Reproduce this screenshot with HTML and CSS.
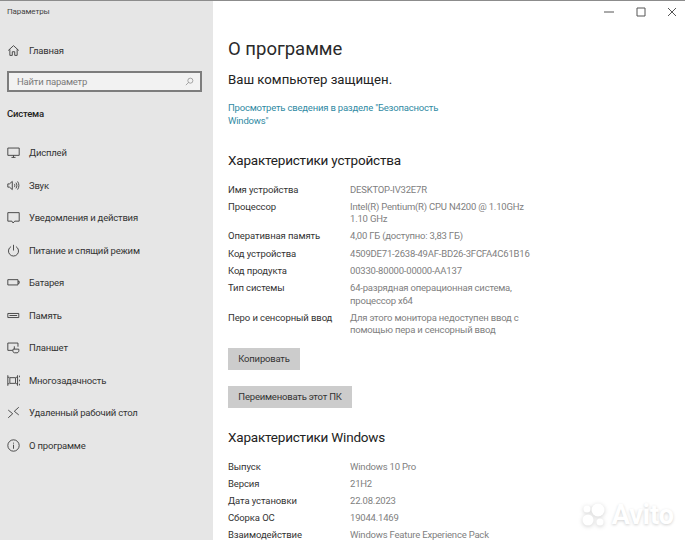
FILE: index.html
```html
<!DOCTYPE html>
<html lang="ru">
<head>
    <meta charset="UTF-8">
    <meta name="viewport" content="width=device-width, initial-scale=1.0">
    <title>Параметры</title>
    <link rel="stylesheet" href="styles.css">
</head>
<body>
    <div class="window">
        <aside class="sidebar">
            <div class="app-title">Параметры</div>
            <div class="home-row">
                <svg class="icon" viewBox="0 0 16 16"><path d="M1.500 8 8 2l6.500 6M3.500 6.500V14H6.500V9.500H9.500V14H12.500V6.500"/></svg>
                <span>Главная</span>
            </div>
            <div class="search">
                <span>Найти параметр</span>
                <svg class="search-icon" viewBox="0 0 16 16"><circle cx="9.500" cy="6.500" r="4.500"/><path d="M6.200 9.800 1.500 14.500"/></svg>
            </div>
            <div class="group-title">Система</div>
            <nav class="nav">
                <div class="nav-item">
                    <svg class="icon" viewBox="0 0 16 16"><path d="M1 2.500H15V11.500H1ZM5.500 14H10.500M8 11.500V14"/></svg>
                    <span>Дисплей</span>
                </div>
                <div class="nav-item">
                    <svg class="icon" viewBox="0 0 16 16"><path d="M1 6V10H3L6.500 13V3L3 6ZM9 6C9.800 7.200 9.800 8.800 9 10M11 4.500C12.500 6.500 12.500 9.500 11 11.500M13 3C15.200 6 15.200 10 13 13"/></svg>
                    <span>Звук</span>
                </div>
                <div class="nav-item">
                    <svg class="icon" viewBox="0 0 16 16"><path d="M1 2H15V12.500H9.500L7.500 14.800L6 12.500H1Z"/></svg>
                    <span>Уведомления и действия</span>
                </div>
                <div class="nav-item">
                    <svg class="icon" viewBox="0 0 16 16"><path d="M5 3.200A6.200 6.200 0 1 0 11 3.200M8 1V8"/></svg>
                    <span>Питание и спящий режим</span>
                </div>
                <div class="nav-item">
                    <svg class="icon" viewBox="0 0 16 16"><path d="M1 4.500H13.500V11H1ZM13.500 6.500H15V9H13.500"/></svg>
                    <span>Батарея</span>
                </div>
                <div class="nav-item">
                    <svg class="icon" viewBox="0 0 16 16"><path d="M1 5.500H14.500V10.500H1ZM3 8H12.500"/></svg>
                    <span>Память</span>
                </div>
                <div class="nav-item">
                    <svg class="icon" viewBox="0 0 16 16"><path d="M7 11.500H1V2.500H13.500V7M9 6.500V10M9 14.500C7 14 7 12 7.500 10H14.500C15 12.500 14 14.500 12.500 14.500Z"/></svg>
                    <span>Планшет</span>
                </div>
                <div class="nav-item">
                    <svg class="icon" viewBox="0 0 16 16"><path d="M3.500 4.500H10.500V11.500H3.500ZM1 1.500V14.500M13 1.500V14.500M1 4H3M1 12H3M11 4H13M11 12H13M15.500 2V4M15.500 7V9M15.500 12V14"/></svg>
                    <span>Многозадачность</span>
                </div>
                <div class="nav-item">
                    <svg class="icon" viewBox="0 0 16 16"><path d="M1.500 5 7 9.500 1.500 14.500M14.500 1.500 9 6.500 14.500 11"/></svg>
                    <span>Удаленный рабочий стол</span>
                </div>
                <div class="nav-item">
                    <svg class="icon" viewBox="0 0 16 16"><circle cx="8" cy="8" r="7"/><path d="M8 7V12M8 4.500V5.700"/></svg>
                    <span>О программе</span>
                </div>
            </nav>
        </aside>
        <main class="content">
            <div class="controls">
                <svg class="control" viewBox="0 0 10 10"><path d="M0 5H10"/></svg>
                <svg class="control" viewBox="0 0 10 10"><path d="M1 1H9V9H1Z"/></svg>
                <svg class="control" viewBox="0 0 10 10"><path d="M1 1 9 9M9 1 1 9"/></svg>
            </div>
            <h1 class="page-title">О программе</h1>
            <div class="protected">Ваш компьютер защищен.</div>
            <a class="link">Просмотреть сведения в разделе "Безопасность Windows"</a>
            <h2 class="section-title device-title">Характеристики устройства</h2>
            <dl class="specs">
                <dt>Имя устройства</dt><dd>DESKTOP-IV32E7R</dd>
                <dt>Процессор</dt><dd>Intel(R) Pentium(R) CPU N4200 @ 1.10GHz<br>1.10 GHz</dd>
                <dt>Оперативная память</dt><dd>4,00 ГБ (доступно: 3,83 ГБ)</dd>
                <dt>Код устройства</dt><dd>4509DE71-2638-49AF-BD26-3FCFA4C61B16</dd>
                <dt>Код продукта</dt><dd>00330-80000-00000-AA137</dd>
                <dt>Тип системы</dt><dd>64-разрядная операционная система,<br>процессор x64</dd>
                <dt>Перо и сенсорный ввод</dt><dd>Для этого монитора недоступен ввод с<br>помощью пера и сенсорный ввод</dd>
            </dl>
            <button class="btn copy-btn">Копировать</button>
            <button class="btn rename-btn">Переименовать этот ПК</button>
            <h2 class="section-title windows-title">Характеристики Windows</h2>
            <dl class="specs">
                <dt>Выпуск</dt><dd>Windows 10 Pro</dd>
                <dt>Версия</dt><dd>21H2</dd>
                <dt>Дата установки</dt><dd>22.08.2023</dd>
                <dt>Сборка ОС</dt><dd>19044.1469</dd>
                <dt>Взаимодействие</dt><dd>Windows Feature Experience Pack</dd>
            </dl>
        </main>
    </div>
    <div class="watermark">
        <svg class="wm-logo" viewBox="0 0 24 26"><circle cx="16" cy="8" r="6.500"/><circle cx="5" cy="7" r="3.500"/><circle cx="6" cy="18" r="5.500"/><circle cx="18" cy="20" r="3.500"/></svg>
        <span>Avito</span>
    </div>
</body>
</html>
```

FILE: styles.css
```css
html, body {
    margin: 0;
    height: 100%;
    overflow: hidden;
}
body {
    font-family: Roboto, "Open Sans", sans-serif;
    background-color: #ffffff;
    color: #333;
    position: relative;
}
.window {
    display: flex;
    height: 540px;
    box-sizing: border-box;
    border-top: 1px solid #8c8c8c;
}
.sidebar {
    width: 213px;
    flex: none;
    background-color: #e6e6e6;
    box-sizing: border-box;
    padding-top: 5px;
    font-size: 9.500px;
    letter-spacing: -0.2px;
}
.app-title {
    padding-left: 7px;
    font-size: 8px;
    line-height: 12px;
    letter-spacing: -0.1px;
    color: #444;
}
.home-row {
    display: flex;
    align-items: center;
    gap: 9px;
    height: 20px;
    margin-top: 22px;
    padding-left: 7px;
}
.icon {
    width: 13px;
    height: 13px;
    flex: none;
    fill: none;
    stroke: #3a3a3a;
    stroke-width: 1.100;
}
.search {
    display: flex;
    align-items: center;
    justify-content: space-between;
    width: 195px;
    height: 21px;
    box-sizing: border-box;
    margin: 11px 0 0 7px;
    padding: 0 6px 0 8px;
    border: 2px solid #7d7d7d;
    background-color: #f2f2f2;
    color: #7a7a7a;
    font-size: 9.500px;
}
.search-icon {
    width: 9px;
    height: 9px;
    fill: none;
    stroke: #808080;
    stroke-width: 1.200;
}
.group-title {
    margin-top: 15px;
    padding-left: 7px;
    height: 14px;
    line-height: 14px;
    font-weight: 500;
    color: #222;
}
.nav {
    display: flex;
    flex-direction: column;
    margin-top: 15.500px;
}
.nav-item {
    display: flex;
    align-items: center;
    gap: 9px;
    height: 32.500px;
    padding-left: 7px;
}
.content {
    flex: 1;
    position: relative;
    padding-left: 15px;
    overflow: hidden;
}
.controls {
    display: flex;
    justify-content: flex-end;
    gap: 21.500px;
    height: 21px;
    align-items: center;
    padding-right: 8px;
}
.control {
    width: 10px;
    height: 10px;
    fill: none;
    stroke: #555;
    stroke-width: 1;
}
.page-title {
    margin: 14px 0 0;
    font-size: 18.500px;
    line-height: 26px;
    font-weight: 400;
    color: #2a2a2a;
}
.protected {
    margin-top: 9px;
    font-size: 13.200px;
    line-height: 18px;
    color: #222;
}
.link {
    display: block;
    width: 225px;
    margin-top: 12px;
    font-size: 9.500px;
    line-height: 13px;
    letter-spacing: -0.2px;
    color: #2f8aa3;
}
.section-title {
    margin: 0;
    font-size: 13.500px;
    line-height: 20px;
    font-weight: 400;
    letter-spacing: -0.2px;
    color: #222;
}
.device-title {
    margin-top: 22.500px;
}
.windows-title {
    margin-top: 19px;
}
.specs {
    display: grid;
    grid-template-columns: 122px 1fr;
    row-gap: 4.300px;
    margin: 14px 0 0;
    font-size: 9.500px;
    line-height: 12.800px;
    letter-spacing: -0.1px;
}
.specs dd {
    margin: 0;
    letter-spacing: -0.2px;
    color: #808080;
}
.btn {
    display: block;
    height: 22px;
    padding: 0;
    border: none;
    background-color: #cccccc;
    color: #333;
    font-family: inherit;
    font-size: 9.500px;
    letter-spacing: -0.2px;
    white-space: nowrap;
}
.copy-btn {
    margin-top: 10.500px;
    width: 72px;
}
.rename-btn {
    margin-top: 16px;
    width: 124px;
}
.watermark {
    position: absolute;
    right: 11px;
    bottom: 12px;
    display: flex;
    align-items: center;
    gap: 6px;
    color: #fff;
    font-size: 27px;
    font-weight: 700;
    line-height: 26px;
    text-shadow: 0 1px 3px rgba(0, 0, 0, 0.18);
}
.wm-logo {
    width: 24px;
    height: 26px;
    fill: #fff;
    filter: drop-shadow(0 1px 2px rgba(0, 0, 0, 0.18));
}
```
